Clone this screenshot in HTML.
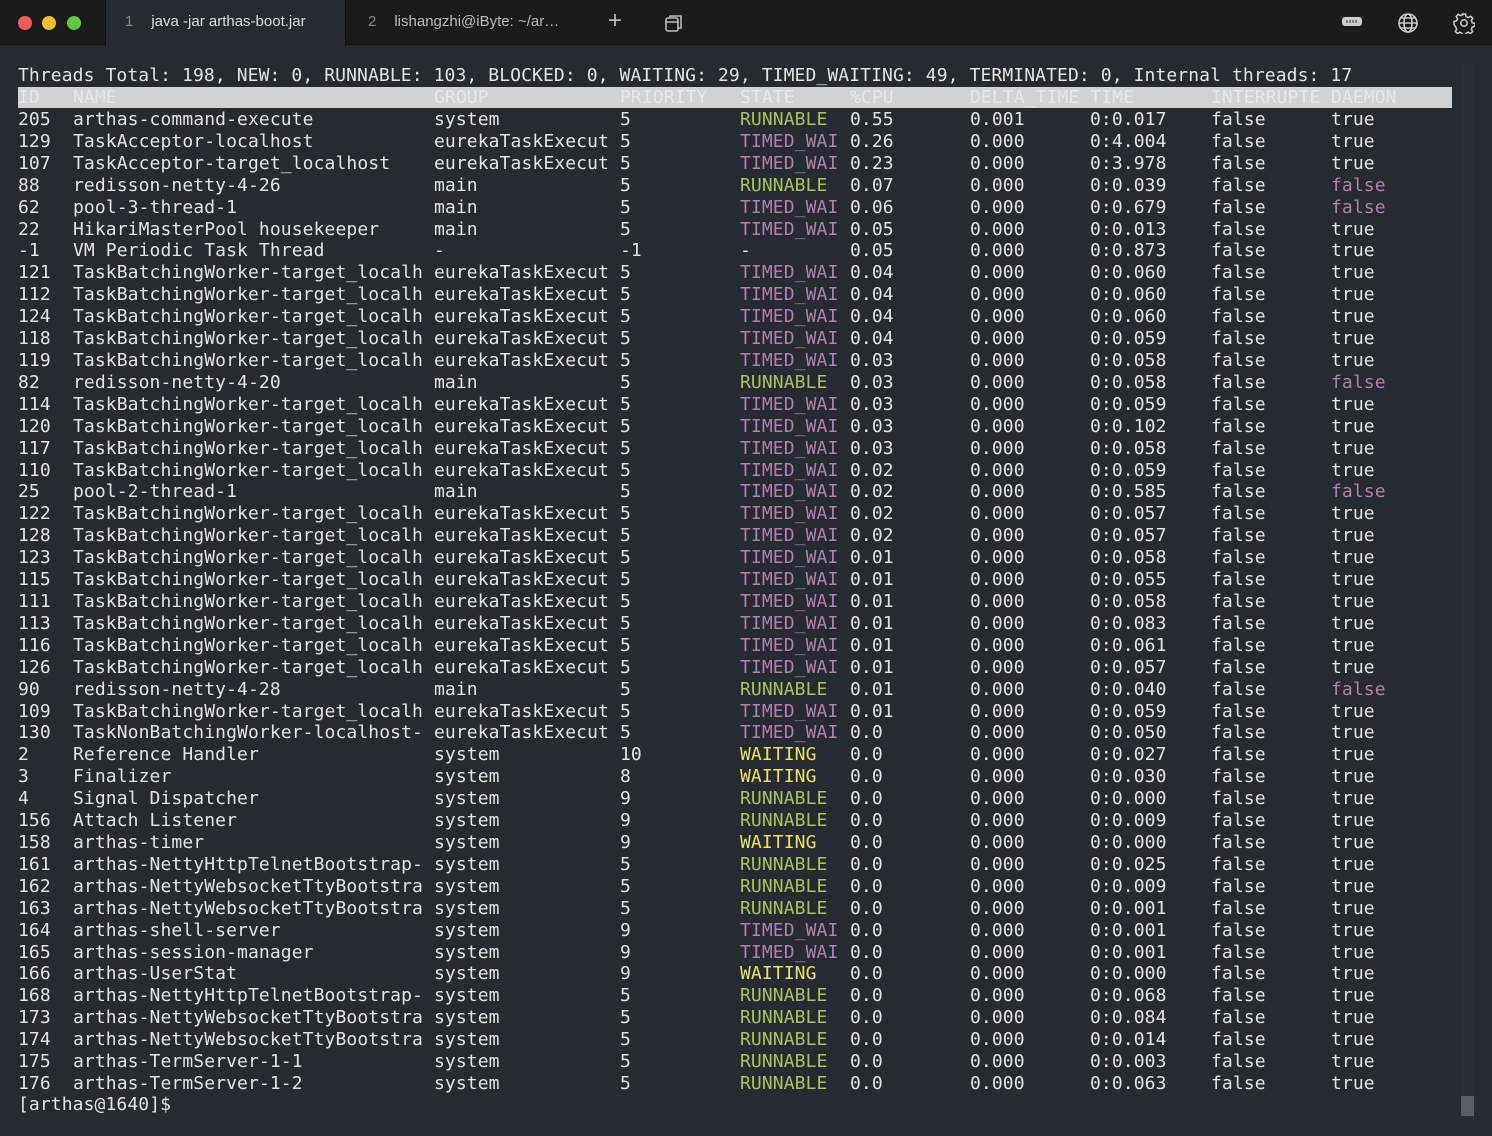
<!DOCTYPE html>
<html><head><meta charset="utf-8"><style>
*{margin:0;padding:0;box-sizing:border-box}
body{width:1492px;height:1136px;background:#262a31;overflow:hidden;font-family:"DejaVu Sans Mono","Liberation Mono",monospace;color:#e4e4e4;position:relative}
.tb{position:absolute;left:0;top:0;width:1492px;height:45px;background:#1b1b1c;border-bottom:1px solid #111}
.dot{position:absolute;top:16px;width:14px;height:14px;border-radius:50%}
.tab1{position:absolute;left:105px;top:0;width:241px;height:46px;background:#262a31;border-left:1px solid #111;border-right:1px solid #111}
.tt{position:absolute;top:13px;font-family:"Liberation Sans",sans-serif;font-size:15px;color:#ddd;white-space:nowrap}
.tn{color:#888;margin-right:18px}
.term{position:absolute;left:18px;top:1px;width:1440px;font-size:18px;letter-spacing:0.1px}
.r{position:absolute;height:22px;line-height:22px;left:0;width:1434px;white-space:pre}
.r span{position:absolute;top:0}
.r span:nth-child(1){left:0}.r span:nth-child(2){left:55px}.r span:nth-child(3){left:416px}
.r span:nth-child(4){left:602px}.r span:nth-child(5){left:722px}.r span:nth-child(6){left:832px}
.r span:nth-child(7){left:952px}.r span:nth-child(8){left:1072px}.r span:nth-child(9){left:1193px}.r span:nth-child(10){left:1313px}
.hd{background:#d2d2d2;color:#e8e8e8;height:21px;top:86px!important}
.g{color:#a8c45c!important}.p{color:#b47fb0!important}.y{color:#ece26a!important}
.sb{position:absolute;left:1461px;top:64px;width:13px;height:1054px;background:#2a2e35}
.sbt{position:absolute;left:1461px;top:1096px;width:13px;height:20px;background:#5a5e64}
</style></head><body>
<div class="tb">
<div class="dot" style="left:18px;background:#ed5f57"></div>
<div class="dot" style="left:42px;background:#f4bd30"></div>
<div class="dot" style="left:67px;background:#5fc93f"></div>
<div class="tab1"></div>
<div class="tt" style="left:125px"><span class="tn">1</span>java -jar arthas-boot.jar</div>
<div class="tt" style="left:368px;color:#bbb"><span class="tn">2</span>lishangzhi@iByte: ~/ar…</div>
<div class="tt" style="left:608px;font-size:24px;top:7px;color:#bbb">+</div>
<svg style="position:absolute;left:664px;top:13px" width="20" height="20" viewBox="0 0 20 20" fill="none" stroke="#bbb" stroke-width="1.6"><rect x="2" y="5" width="12" height="13" rx="2"/><path d="M6 5V3h11v12h-3M2 9h12"/></svg>
<svg style="position:absolute;left:1342px;top:16px" width="20" height="12" viewBox="0 0 20 12"><rect x="0" y="1" width="20" height="9" rx="3" fill="#ccc"/><path d="M5 4v3M8 4v3M11 4v3M14 4v3" stroke="#333" stroke-width="1"/></svg>
<svg style="position:absolute;left:1397px;top:12px" width="22" height="22" viewBox="0 0 22 22" fill="none" stroke="#ccc" stroke-width="1.6"><circle cx="11" cy="11" r="9"/><ellipse cx="11" cy="11" rx="4" ry="9"/><path d="M2 11h18M4 6h14M4 16h14"/></svg>
<svg style="position:absolute;left:1453px;top:12px" width="22" height="22" viewBox="0 0 22 22" fill="none" stroke="#ccc" stroke-width="1.5"><circle cx="11" cy="11" r="3.2"/><path d="M9.5 2h3l.6 2.6 2.2 1 2.3-1.4 2.1 2.1-1.4 2.3 1 2.2 2.6.6v3l-2.6.6-1 2.2 1.4 2.3-2.1 2.1-2.3-1.4-2.2 1-.6 2.6h-3l-.6-2.6-2.2-1-2.3 1.4-2.1-2.1 1.4-2.3-1-2.2L1 12.5v-3l2.6-.6 1-2.2-1.4-2.3 2.1-2.1 2.3 1.4 2.2-1z"/></svg>
</div>
<div class="sb"></div><div class="sbt"></div>
<div class="term">
<div class="r" style="top:64px">Threads Total: 198, NEW: 0, RUNNABLE: 103, BLOCKED: 0, WAITING: 29, TIMED_WAITING: 49, TERMINATED: 0, Internal threads: 17</div>
<div class="r hd"><span>ID</span><span>NAME</span><span>GROUP</span><span>PRIORITY</span><span>STATE</span><span>%CPU</span><span>DELTA_TIME TIME</span><span></span><span>INTERRUPTE</span><span>DAEMON</span></div>
<div class="r" style="top:108px"><span>205</span><span>arthas-command-execute</span><span>system</span><span>5</span><span class="g">RUNNABLE</span><span>0.55</span><span>0.001</span><span>0:0.017</span><span>false</span><span>true</span></div>
<div class="r" style="top:130px"><span>129</span><span>TaskAcceptor-localhost</span><span>eurekaTaskExecut</span><span>5</span><span class="p">TIMED_WAI</span><span>0.26</span><span>0.000</span><span>0:4.004</span><span>false</span><span>true</span></div>
<div class="r" style="top:152px"><span>107</span><span>TaskAcceptor-target_localhost</span><span>eurekaTaskExecut</span><span>5</span><span class="p">TIMED_WAI</span><span>0.23</span><span>0.000</span><span>0:3.978</span><span>false</span><span>true</span></div>
<div class="r" style="top:174px"><span>88</span><span>redisson-netty-4-26</span><span>main</span><span>5</span><span class="g">RUNNABLE</span><span>0.07</span><span>0.000</span><span>0:0.039</span><span>false</span><span class="p">false</span></div>
<div class="r" style="top:196px"><span>62</span><span>pool-3-thread-1</span><span>main</span><span>5</span><span class="p">TIMED_WAI</span><span>0.06</span><span>0.000</span><span>0:0.679</span><span>false</span><span class="p">false</span></div>
<div class="r" style="top:218px"><span>22</span><span>HikariMasterPool housekeeper</span><span>main</span><span>5</span><span class="p">TIMED_WAI</span><span>0.05</span><span>0.000</span><span>0:0.013</span><span>false</span><span>true</span></div>
<div class="r" style="top:239px"><span>-1</span><span>VM Periodic Task Thread</span><span>-</span><span>-1</span><span>-</span><span>0.05</span><span>0.000</span><span>0:0.873</span><span>false</span><span>true</span></div>
<div class="r" style="top:261px"><span>121</span><span>TaskBatchingWorker-target_localh</span><span>eurekaTaskExecut</span><span>5</span><span class="p">TIMED_WAI</span><span>0.04</span><span>0.000</span><span>0:0.060</span><span>false</span><span>true</span></div>
<div class="r" style="top:283px"><span>112</span><span>TaskBatchingWorker-target_localh</span><span>eurekaTaskExecut</span><span>5</span><span class="p">TIMED_WAI</span><span>0.04</span><span>0.000</span><span>0:0.060</span><span>false</span><span>true</span></div>
<div class="r" style="top:305px"><span>124</span><span>TaskBatchingWorker-target_localh</span><span>eurekaTaskExecut</span><span>5</span><span class="p">TIMED_WAI</span><span>0.04</span><span>0.000</span><span>0:0.060</span><span>false</span><span>true</span></div>
<div class="r" style="top:327px"><span>118</span><span>TaskBatchingWorker-target_localh</span><span>eurekaTaskExecut</span><span>5</span><span class="p">TIMED_WAI</span><span>0.04</span><span>0.000</span><span>0:0.059</span><span>false</span><span>true</span></div>
<div class="r" style="top:349px"><span>119</span><span>TaskBatchingWorker-target_localh</span><span>eurekaTaskExecut</span><span>5</span><span class="p">TIMED_WAI</span><span>0.03</span><span>0.000</span><span>0:0.058</span><span>false</span><span>true</span></div>
<div class="r" style="top:371px"><span>82</span><span>redisson-netty-4-20</span><span>main</span><span>5</span><span class="g">RUNNABLE</span><span>0.03</span><span>0.000</span><span>0:0.058</span><span>false</span><span class="p">false</span></div>
<div class="r" style="top:393px"><span>114</span><span>TaskBatchingWorker-target_localh</span><span>eurekaTaskExecut</span><span>5</span><span class="p">TIMED_WAI</span><span>0.03</span><span>0.000</span><span>0:0.059</span><span>false</span><span>true</span></div>
<div class="r" style="top:415px"><span>120</span><span>TaskBatchingWorker-target_localh</span><span>eurekaTaskExecut</span><span>5</span><span class="p">TIMED_WAI</span><span>0.03</span><span>0.000</span><span>0:0.102</span><span>false</span><span>true</span></div>
<div class="r" style="top:437px"><span>117</span><span>TaskBatchingWorker-target_localh</span><span>eurekaTaskExecut</span><span>5</span><span class="p">TIMED_WAI</span><span>0.03</span><span>0.000</span><span>0:0.058</span><span>false</span><span>true</span></div>
<div class="r" style="top:459px"><span>110</span><span>TaskBatchingWorker-target_localh</span><span>eurekaTaskExecut</span><span>5</span><span class="p">TIMED_WAI</span><span>0.02</span><span>0.000</span><span>0:0.059</span><span>false</span><span>true</span></div>
<div class="r" style="top:480px"><span>25</span><span>pool-2-thread-1</span><span>main</span><span>5</span><span class="p">TIMED_WAI</span><span>0.02</span><span>0.000</span><span>0:0.585</span><span>false</span><span class="p">false</span></div>
<div class="r" style="top:502px"><span>122</span><span>TaskBatchingWorker-target_localh</span><span>eurekaTaskExecut</span><span>5</span><span class="p">TIMED_WAI</span><span>0.02</span><span>0.000</span><span>0:0.057</span><span>false</span><span>true</span></div>
<div class="r" style="top:524px"><span>128</span><span>TaskBatchingWorker-target_localh</span><span>eurekaTaskExecut</span><span>5</span><span class="p">TIMED_WAI</span><span>0.02</span><span>0.000</span><span>0:0.057</span><span>false</span><span>true</span></div>
<div class="r" style="top:546px"><span>123</span><span>TaskBatchingWorker-target_localh</span><span>eurekaTaskExecut</span><span>5</span><span class="p">TIMED_WAI</span><span>0.01</span><span>0.000</span><span>0:0.058</span><span>false</span><span>true</span></div>
<div class="r" style="top:568px"><span>115</span><span>TaskBatchingWorker-target_localh</span><span>eurekaTaskExecut</span><span>5</span><span class="p">TIMED_WAI</span><span>0.01</span><span>0.000</span><span>0:0.055</span><span>false</span><span>true</span></div>
<div class="r" style="top:590px"><span>111</span><span>TaskBatchingWorker-target_localh</span><span>eurekaTaskExecut</span><span>5</span><span class="p">TIMED_WAI</span><span>0.01</span><span>0.000</span><span>0:0.058</span><span>false</span><span>true</span></div>
<div class="r" style="top:612px"><span>113</span><span>TaskBatchingWorker-target_localh</span><span>eurekaTaskExecut</span><span>5</span><span class="p">TIMED_WAI</span><span>0.01</span><span>0.000</span><span>0:0.083</span><span>false</span><span>true</span></div>
<div class="r" style="top:634px"><span>116</span><span>TaskBatchingWorker-target_localh</span><span>eurekaTaskExecut</span><span>5</span><span class="p">TIMED_WAI</span><span>0.01</span><span>0.000</span><span>0:0.061</span><span>false</span><span>true</span></div>
<div class="r" style="top:656px"><span>126</span><span>TaskBatchingWorker-target_localh</span><span>eurekaTaskExecut</span><span>5</span><span class="p">TIMED_WAI</span><span>0.01</span><span>0.000</span><span>0:0.057</span><span>false</span><span>true</span></div>
<div class="r" style="top:678px"><span>90</span><span>redisson-netty-4-28</span><span>main</span><span>5</span><span class="g">RUNNABLE</span><span>0.01</span><span>0.000</span><span>0:0.040</span><span>false</span><span class="p">false</span></div>
<div class="r" style="top:700px"><span>109</span><span>TaskBatchingWorker-target_localh</span><span>eurekaTaskExecut</span><span>5</span><span class="p">TIMED_WAI</span><span>0.01</span><span>0.000</span><span>0:0.059</span><span>false</span><span>true</span></div>
<div class="r" style="top:721px"><span>130</span><span>TaskNonBatchingWorker-localhost-</span><span>eurekaTaskExecut</span><span>5</span><span class="p">TIMED_WAI</span><span>0.0</span><span>0.000</span><span>0:0.050</span><span>false</span><span>true</span></div>
<div class="r" style="top:743px"><span>2</span><span>Reference Handler</span><span>system</span><span>10</span><span class="y">WAITING</span><span>0.0</span><span>0.000</span><span>0:0.027</span><span>false</span><span>true</span></div>
<div class="r" style="top:765px"><span>3</span><span>Finalizer</span><span>system</span><span>8</span><span class="y">WAITING</span><span>0.0</span><span>0.000</span><span>0:0.030</span><span>false</span><span>true</span></div>
<div class="r" style="top:787px"><span>4</span><span>Signal Dispatcher</span><span>system</span><span>9</span><span class="g">RUNNABLE</span><span>0.0</span><span>0.000</span><span>0:0.000</span><span>false</span><span>true</span></div>
<div class="r" style="top:809px"><span>156</span><span>Attach Listener</span><span>system</span><span>9</span><span class="g">RUNNABLE</span><span>0.0</span><span>0.000</span><span>0:0.009</span><span>false</span><span>true</span></div>
<div class="r" style="top:831px"><span>158</span><span>arthas-timer</span><span>system</span><span>9</span><span class="y">WAITING</span><span>0.0</span><span>0.000</span><span>0:0.000</span><span>false</span><span>true</span></div>
<div class="r" style="top:853px"><span>161</span><span>arthas-NettyHttpTelnetBootstrap-</span><span>system</span><span>5</span><span class="g">RUNNABLE</span><span>0.0</span><span>0.000</span><span>0:0.025</span><span>false</span><span>true</span></div>
<div class="r" style="top:875px"><span>162</span><span>arthas-NettyWebsocketTtyBootstra</span><span>system</span><span>5</span><span class="g">RUNNABLE</span><span>0.0</span><span>0.000</span><span>0:0.009</span><span>false</span><span>true</span></div>
<div class="r" style="top:897px"><span>163</span><span>arthas-NettyWebsocketTtyBootstra</span><span>system</span><span>5</span><span class="g">RUNNABLE</span><span>0.0</span><span>0.000</span><span>0:0.001</span><span>false</span><span>true</span></div>
<div class="r" style="top:919px"><span>164</span><span>arthas-shell-server</span><span>system</span><span>9</span><span class="p">TIMED_WAI</span><span>0.0</span><span>0.000</span><span>0:0.001</span><span>false</span><span>true</span></div>
<div class="r" style="top:941px"><span>165</span><span>arthas-session-manager</span><span>system</span><span>9</span><span class="p">TIMED_WAI</span><span>0.0</span><span>0.000</span><span>0:0.001</span><span>false</span><span>true</span></div>
<div class="r" style="top:962px"><span>166</span><span>arthas-UserStat</span><span>system</span><span>9</span><span class="y">WAITING</span><span>0.0</span><span>0.000</span><span>0:0.000</span><span>false</span><span>true</span></div>
<div class="r" style="top:984px"><span>168</span><span>arthas-NettyHttpTelnetBootstrap-</span><span>system</span><span>5</span><span class="g">RUNNABLE</span><span>0.0</span><span>0.000</span><span>0:0.068</span><span>false</span><span>true</span></div>
<div class="r" style="top:1006px"><span>173</span><span>arthas-NettyWebsocketTtyBootstra</span><span>system</span><span>5</span><span class="g">RUNNABLE</span><span>0.0</span><span>0.000</span><span>0:0.084</span><span>false</span><span>true</span></div>
<div class="r" style="top:1028px"><span>174</span><span>arthas-NettyWebsocketTtyBootstra</span><span>system</span><span>5</span><span class="g">RUNNABLE</span><span>0.0</span><span>0.000</span><span>0:0.014</span><span>false</span><span>true</span></div>
<div class="r" style="top:1050px"><span>175</span><span>arthas-TermServer-1-1</span><span>system</span><span>5</span><span class="g">RUNNABLE</span><span>0.0</span><span>0.000</span><span>0:0.003</span><span>false</span><span>true</span></div>
<div class="r" style="top:1072px"><span>176</span><span>arthas-TermServer-1-2</span><span>system</span><span>5</span><span class="g">RUNNABLE</span><span>0.0</span><span>0.000</span><span>0:0.063</span><span>false</span><span>true</span></div>
<div class="r" style="top:1093px">[arthas@1640]$</div>
</div>
</body></html>
